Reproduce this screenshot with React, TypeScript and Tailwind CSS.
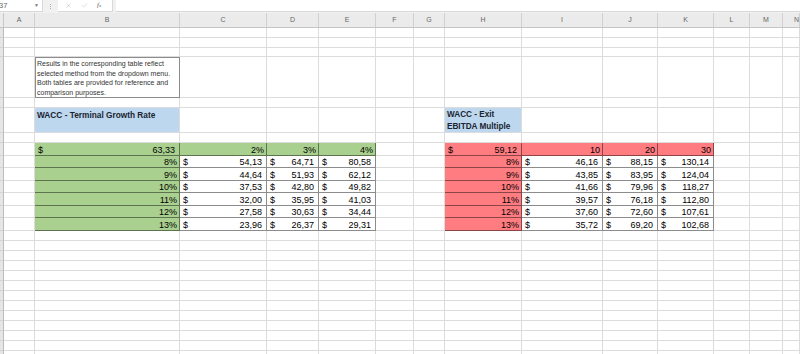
import { Check, X } from "lucide-react";

type Table = {
  start: number;
  fill: string;
  head: string[];
  rows: string[][];
};

const letters = ["A", "B", "C", "D", "E", "F", "G", "H", "I", "J", "K", "L", "M", "N"];

const tables: Table[] = [
  {
    start: 2,
    fill: "bg-[#a9d08e]",
    head: ["63,33", "2%", "3%", "4%"],
    rows: [
      ["8%", "54,13", "64,71", "80,58"],
      ["9%", "44,64", "51,93", "62,12"],
      ["10%", "37,53", "42,80", "49,82"],
      ["11%", "32,00", "35,95", "41,03"],
      ["12%", "27,58", "30,63", "34,44"],
      ["13%", "23,96", "26,37", "29,31"],
    ],
  },
  {
    start: 8,
    fill: "bg-[#ff7c80]",
    head: ["59,12", "10", "20", "30"],
    rows: [
      ["8%", "46,16", "88,15", "130,14"],
      ["9%", "43,85", "83,95", "124,04"],
      ["10%", "41,66", "79,96", "118,27"],
      ["11%", "39,57", "76,18", "112,80"],
      ["12%", "37,60", "72,60", "107,61"],
      ["13%", "35,72", "69,20", "102,68"],
    ],
  },
];

const ROWS = 27;
const COLS = 15;

const grid = "border-r border-b border-[#dcdcdc]";
const boxed = "border-r border-b border-black/45";

function Money({ v }: { v: string }) {
  return (
    <div className="flex h-full items-end justify-between pl-[3px] pr-[4px] text-[9px] leading-none">
      <span>$</span>
      <span>{v}</span>
    </div>
  );
}

function Plain({ v }: { v: string }) {
  return (
    <div className="flex h-full items-end justify-end pr-[2px] text-[9px] leading-none">
      {v}
    </div>
  );
}

function Cell({ r, c }: { r: number; c: number }) {
  // row header strip, mostly scrolled out of view
  if (c === 0) {
    return <div className="border-r border-b border-r-[#bcbcbc] border-b-[#d2d2d2] bg-[#e6e6e6]" />;
  }

  if (r === 3 && c === 2) {
    return (
      <div className="border border-[#8c8c8c] pl-[1px] pt-[1px] text-[7px] leading-[9.6px] text-[#333]">
        Results in the corresponding table reflect
        <br />
        selected method from the dropdown menu.
        <br />
        Both tables are provided for reference and
        <br />
        comparison purposes.
      </div>
    );
  }

  if (r === 5 && c === 2) {
    return (
      <div className={`${grid} bg-[#bdd7ee] pl-[2px] pt-[1px] text-[8.3px] font-bold leading-[12px] text-[#1b2430]`}>
        WACC - Terminal Growth Rate
      </div>
    );
  }

  if (r === 5 && c === 8) {
    return (
      <div className={`${grid} bg-[#bdd7ee] pl-[2px] pt-[1px] text-[8.2px] font-bold leading-[12px] text-[#1b2430]`}>
        WACC - Exit
        <br />
        EBITDA Multiple
      </div>
    );
  }

  const t = tables.find((x) => c >= x.start && c < x.start + 4);
  if (t && r >= 7 && r <= 13) {
    const k = c - t.start;
    if (r === 7) {
      return (
        <div className={`${boxed} ${t.fill}`}>
          {k === 0 ? <Money v={t.head[0]} /> : <Plain v={t.head[k]} />}
        </div>
      );
    }
    const row = t.rows[r - 8];
    if (k === 0) {
      return (
        <div className={`${boxed} ${t.fill}`}>
          <Plain v={row[0]} />
        </div>
      );
    }
    return (
      <div className={`${boxed} bg-white`}>
        <Money v={row[k]} />
      </div>
    );
  }

  return <div className={grid} />;
}

export default function App() {
  const cells = [];
  for (let r = 0; r < ROWS; r++) {
    for (let c = 0; c < COLS; c++) {
      cells.push(<Cell key={`${r}-${c}`} r={r} c={c} />);
    }
  }

  return (
    <div className="h-[354px] w-[800px] overflow-hidden bg-white font-['Liberation_Sans',Arial,sans-serif] text-black">
      {/* formula bar */}
      <div className="flex h-[13px] bg-[#f1f1f1] pb-[1px]">
        <div className="relative flex w-[43px] items-center border-r border-b border-[#d8d8d8] bg-white text-[7.5px] text-[#666]">
          <span className="-ml-[1px]">37</span>
          <span className="absolute right-[3px] top-[2px] text-[5px] text-[#777]">▼</span>
        </div>
        <div className="flex w-[15px] flex-col items-center justify-center gap-[1px]">
          <span className="h-[1px] w-[1px] bg-[#aaa]" />
          <span className="h-[1px] w-[1px] bg-[#aaa]" />
          <span className="h-[1px] w-[1px] bg-[#aaa]" />
        </div>
        <div className="flex w-[55px] items-center gap-[9px] border-r border-b border-[#d8d8d8] bg-white pl-[7px] text-[#a0a0a0]">
          <X size={7} strokeWidth={1.3} />
          <Check size={7} strokeWidth={1.3} />
          <span className="font-['Liberation_Serif',serif] text-[7px] italic text-[#666]">
            f<span className="text-[5px]">x</span>
          </span>
        </div>
        <div className="ml-[3px] flex-1 border-b border-[#d8d8d8] bg-white" />
      </div>

      {/* column headers */}
      <div className="grid h-[15px] grid-cols-[4px_31px_145px_87px_52px_57px_38px_31px_77px_81px_55px_56px_36px_33px_1fr] border-b border-[#c4c4c4] bg-[#ebebeb] text-[7px] text-[#666]">
        <div className="border-r border-[#c8c8c8]" />
        {letters.map((l, i) => (
          <div
            key={l}
            className={`flex items-center border-r border-[#d0d0d0] ${i === 13 ? "pl-[11px]" : "justify-center"}`}
          >
            {l}
          </div>
        ))}
      </div>

      {/* sheet */}
      <div className="grid grid-cols-[4px_31px_145px_87px_52px_57px_38px_31px_77px_81px_55px_56px_36px_33px_1fr] grid-rows-[10px_10px_9px_41px_10px_25px_10px_repeat(7,12.5px)_repeat(13,10px)]">
        {cells}
      </div>
    </div>
  );
}
